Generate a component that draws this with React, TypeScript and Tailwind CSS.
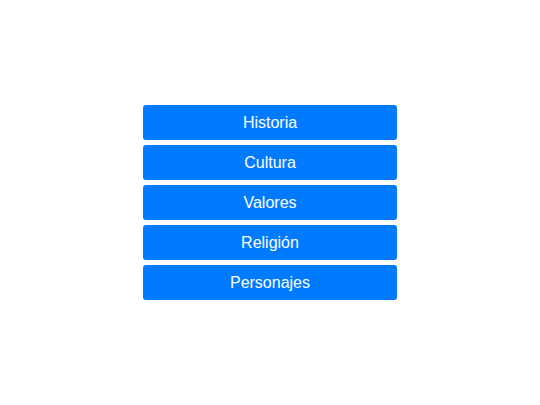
const items = ["Historia", "Cultura", "Valores", "Religión", "Personajes"];

export default function App() {
  return (
    <div className="flex h-[405px] w-[540px] items-center justify-center bg-white" style={{ fontFamily: '"Liberation Sans", Arial, sans-serif' }}>
      <div className="flex w-[254px] flex-col gap-[5px]">
        {items.map((label) => (
          <button
            key={label}
            className="flex h-[35px] items-center justify-center rounded-[3px] bg-[#007bff] text-[16px] text-white"
          >
            {label}
          </button>
        ))}
      </div>
    </div>
  );
}
